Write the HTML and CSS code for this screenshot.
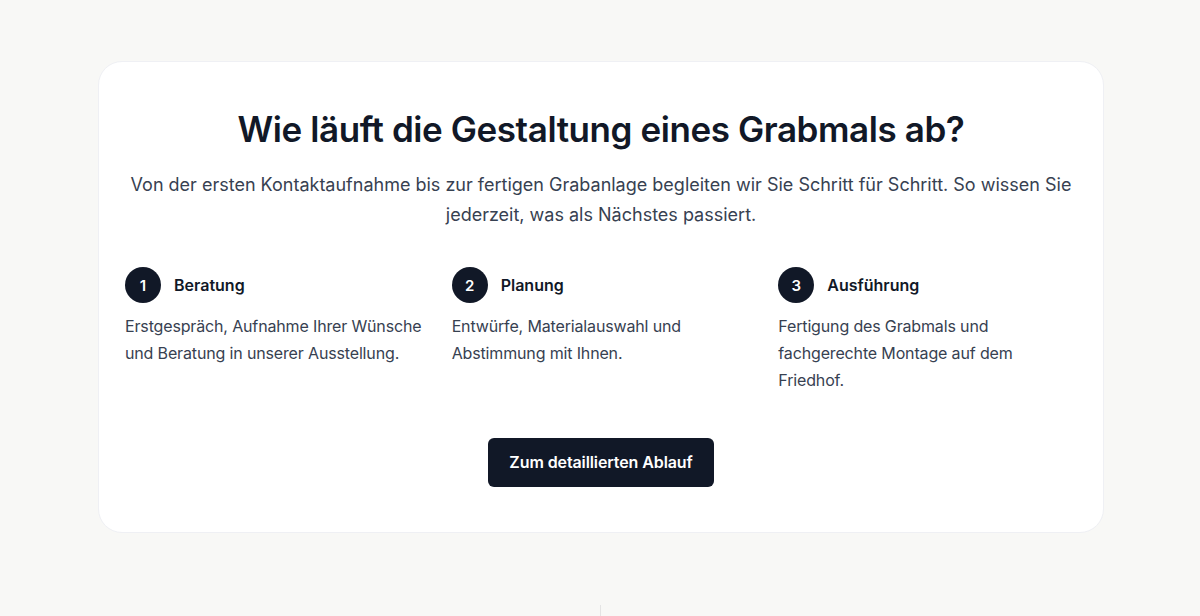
FILE: index.html
```html
<!DOCTYPE html>
<html lang="de">

<head>
  <meta charset="UTF-8" />
  <meta name="viewport" content="width=device-width, initial-scale=1.0" />
  <title>Ablauf Grabmal</title>
  <link rel="stylesheet" href="styles.css">
</head>

<body>
  <div class="page">

    <!-- Ablauf -->
    <section class="card">
      <h2 class="title">Wie läuft die Gestaltung eines Grabmals ab?</h2>
      <p class="lead">Von der ersten Kontaktaufnahme bis zur fertigen Grabanlage begleiten wir Sie Schritt für Schritt. So wissen Sie jederzeit, was als Nächstes passiert.</p>

      <ol class="steps">
        <li class="step">
          <div class="step-head">
            <span class="num">1</span>
            <h3>Beratung</h3>
          </div>
          <p>Erstgespräch, Aufnahme Ihrer Wünsche und Beratung in unserer Ausstellung.</p>
        </li>
        <li class="step">
          <div class="step-head">
            <span class="num">2</span>
            <h3>Planung</h3>
          </div>
          <p>Entwürfe, Materialauswahl und Abstimmung mit Ihnen.</p>
        </li>
        <li class="step">
          <div class="step-head">
            <span class="num">3</span>
            <h3>Ausführung</h3>
          </div>
          <p>Fertigung des Grabmals und fachgerechte Montage auf dem Friedhof.</p>
        </li>
      </ol>

      <div class="actions">
        <a class="btn" href="#">Zum detaillierten Ablauf</a>
      </div>
    </section>

    <!-- nächster Abschnitt -->
    <div class="next">
      <div class="half"></div>
      <div class="half"></div>
    </div>

  </div>
</body>

</html>
```

FILE: styles.css
```css
* {
  margin: 0;
  padding: 0;
  box-sizing: border-box;
}

body {
  background: #f8f8f6;
  font-family: Inter, "Noto Sans", sans-serif;
  color: #111827;
}

ol {
  list-style: none;
}

.page {
  padding: 61px 96px 0 98px;
}

.card {
  background: #fff;
  border: 1px solid #eff0f4;
  border-radius: 24px;
  padding: 47px 26px 45px;
}

.title {
  font-size: 35px;
  line-height: 40px;
  font-weight: 600;
  letter-spacing: -0.42px;
  text-align: center;
  color: #111827;
}

.lead {
  margin-top: 21px;
  font-size: 18px;
  line-height: 30px;
  text-align: center;
  color: #374151;
}

.steps {
  margin-top: 37px;
  display: grid;
  grid-template-columns: repeat(3, 1fr);
  column-gap: 28px;
}

.step-head {
  display: flex;
  align-items: center;
  gap: 13px;
}

.num {
  width: 36px;
  height: 36px;
  border-radius: 50%;
  background: #111827;
  color: #fff;
  display: flex;
  align-items: center;
  justify-content: center;
  font-size: 15px;
  font-weight: 600;
}

.step-head h3 {
  font-size: 16px;
  font-weight: 600;
  color: #111827;
}

.step p {
  margin-top: 10px;
  font-size: 16px;
  line-height: 27px;
  letter-spacing: -0.15px;
  color: #374151;
}

.actions {
  margin-top: 44px;
  display: flex;
  justify-content: center;
}

.btn {
  display: inline-block;
  background: #111827;
  color: #fff;
  text-decoration: none;
  font-size: 16px;
  font-weight: 600;
  line-height: 24px;
  letter-spacing: -0.1px;
  padding: 12px 21px 13px;
  border-radius: 6px;
}

.next {
  margin-top: 72px;
  display: flex;
  height: 40px;
}

.half {
  flex: 0 0 503px;
}

.half:first-child {
  border-right: 1px solid #e4e4e4;
}
```
